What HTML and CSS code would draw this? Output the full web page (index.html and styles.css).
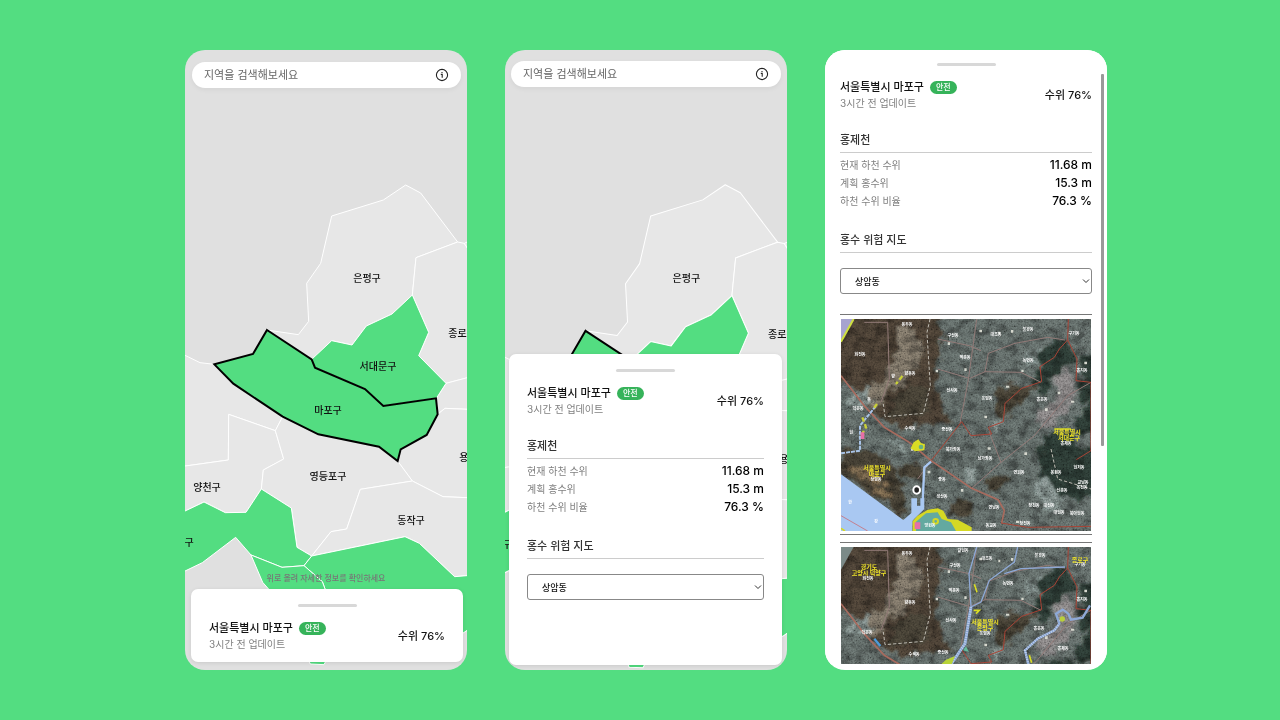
FILE: index.html
```html
<!DOCTYPE html>
<html lang="ko">
<head>
<meta charset="utf-8">
<meta name="viewport" content="width=device-width, initial-scale=1">
<title>하천 수위 지도</title>
<link rel="stylesheet" href="styles.css">
</head>
<body>
<svg class="defs" aria-hidden="true">
  <symbol id="districts" viewBox="0 0 282 620" preserveAspectRatio="xMidYMid slice" overflow="visible">
    <svg width="282" height="620" viewBox="0 0 846 1860" overflow="visible">
      <g class="land">
        <path d="M-6 913L45 938 88 943 145 1001 293 1100 271 1142 131 1093 130 1230-6 1249Z"/>
        <path d="M440 498L595 450 662 405 707 429 818 576 693 623 682 735 621 792 544 828 501 885 440 872 382 928 246 840 340 854 371 814 365 700 407 640Z"/>
        <path d="M693 623L818 576 838 580 870 630 870 977 783 1000 701 917 731 847 682 735Z"/>
        <path d="M838 580L870 565 870 630Z"/>
        <path d="M783 1000L870 977 870 1079 780 1075 758 1092 754 1045Z"/>
        <path d="M638 1233L647 1198 725 1155 758 1093 780 1075 870 1079 870 1344 774 1340 682 1293Z"/>
        <path d="M131 1093L271 1142 296 1227 235 1260 229 1317 183 1387 121 1388 57 1356-6 1386-6 1249 130 1230Z"/>
        <path d="M293 1100L400 1153 582 1190 638 1233 682 1293 526 1318 485 1437 438 1445 380 1518 336 1492 319 1374 229 1317 235 1260 296 1227 271 1142Z"/>
        <path d="M682 1293L774 1340 870 1344 870 1575 809 1580 703 1480 660 1460 380 1518 438 1445 485 1437 526 1318Z"/>
      </g>
      <g class="land safe">
        <path d="M682 735L731 847 701 917 783 1000 754 1045 595 1068 540 1017 390 953 380 928 440 872 501 885 544 828 621 792Z"/>
        <path d="M-6 1386L57 1356 121 1388 183 1387 229 1317 319 1374 336 1492 380 1518 357 1547 291 1552 198 1515 152 1462 52 1538-6 1566Z"/>
        <path d="M380 1518L660 1460 703 1480 809 1580 870 1575 870 1725 833 1750 560 1800 425 1630 412 1595 357 1547Z"/>
        <path d="M198 1515L291 1552 357 1547 412 1595 425 1630 450 1780 417 1844 376 1842 300 1680 255 1622 233 1597Z"/>
      </g>
      <path class="chosen" d="M246 840L380 928 390 953 540 1017 595 1068 753 1045 758 1093 725 1155 647 1198 638 1233 582 1190 400 1153 293 1100 145 1001 88 943 204 912Z"/>
    </svg>
    <g class="names">
      <text x="182" y="232">은평구</text><text x="193" y="320">서대문구</text><text x="143" y="364">마포구</text>
      <text x="143" y="430">영등포구</text><text x="22" y="441">양천구</text><text x="226" y="474">동작구</text>
      <text x="277" y="287">종로구</text><text x="288" y="411">용산구</text><text x="-5" y="496">구로구</text>
    </g>
  </symbol>
  <symbol id="info" viewBox="0 0 14 14">
    <circle cx="7" cy="7" r="5.6" fill="none" stroke="#222" stroke-width="1.1"/>
    <path d="M5.8 6.4H7.2V9.8M7 4V5" fill="none" stroke="#222" stroke-width="1.1"/>
  </symbol>
  <filter id="grain" x="0" y="0" width="100%" height="100%">
    <feTurbulence type="fractalNoise" baseFrequency=".2" numOctaves="3" seed="8"/>
    <feColorMatrix values="1.6 0 0 0 -.3 1.6 0 0 0 -.3 1.6 0 0 0 -.3 0 0 0 0 .3"/>
  </filter>
  <filter id="ridges" x="0" y="0" width="100%" height="100%">
    <feTurbulence type="fractalNoise" baseFrequency=".03 .04" numOctaves="4" seed="3"/>
    <feColorMatrix values="0 0 0 0 0 0 0 0 0 0 0 0 0 0 0 2.6 0 0 0 -1.1"/>
  </filter>
  <filter id="rough" x="-5%" y="-5%" width="110%" height="110%">
    <feTurbulence type="fractalNoise" baseFrequency=".03" numOctaves="3" seed="5" result="n"/>
    <feDisplacementMap in="SourceGraphic" in2="n" scale="60" xChannelSelector="R" yChannelSelector="G"/>
    <feGaussianBlur stdDeviation="3"/>
  </filter>
  <symbol id="terrain" viewBox="0 0 750 636">
    <rect width="750" height="636" fill="#5c6562"/>
    <g filter="url(#rough)">
      <path fill="#463d33" d="M30-30H295L300 80 278 150 295 230 325 300 240 330 150 320 100 290 60 220-30 170V60Z"/>
      <path fill="#746d61" d="M165 15L225 25 245 110 215 165 180 200 130 230 105 275 60 215 150 160 170 90Z"/>
      <path fill="#433c30" d="M150 245L200 205 250 200 265 285 160 295ZM0 400L60 388 115 410 195 500 185 600 150 575 0 460ZM165 445L230 430 255 470 190 485ZM475 200L550 205 590 200 530 245 490 310 455 280ZM320 550L380 545 390 590 340 585ZM440 490L500 475 480 520 435 510Z"/>
      <path fill="#2b3830" d="M590 95L682 60 705 130 650 160 615 220 575 195 600 150ZM715 110L780 100V370L715 340 700 290 730 270ZM600 370L650 335 705 365 780 420V500L700 545 610 520 590 440Z"/>
      <path fill="#7d7a7a" d="M640 165L690 160 700 230 680 290 610 320 590 300 640 230Z"/>
      <path fill="#73624a" d="M25 455L70 440 110 475 90 495ZM90 500L135 490 160 540 145 550Z"/>
      <path fill="#7c8885" d="M20 240L75 205 95 240 50 260ZM150 345L195 375 185 395 145 365ZM370 450L410 445 415 480 380 485ZM560 110L590 90 600 125 570 150ZM460 310L490 300 480 340 455 345ZM580 500L620 480 680 540 620 590Z"/>
    </g>
    <rect width="750" height="636" filter="url(#ridges)" opacity=".35"/>
    <rect class="grain" width="750" height="636" filter="url(#grain)"/>
    <g fill="#d6d8ce"><path d="M415 32h8v8h-8ZM472 38h6v8h-6ZM510 33h7v8h-7ZM320 70h7v8h-7ZM284 152h7v8h-7ZM370 148h7v8h-7ZM430 290h8v8h-8ZM495 200h10v6h-10ZM541 152h7v7h-7ZM612 268h8v8h-8ZM730 128h8v8h-8ZM440 385h9v7h-9ZM650 218h8v8h-8ZM550 400h8v8h-8ZM260 455h8v8h-8ZM360 510h7v8h-7ZM525 605h9v7h-9ZM690 245h10v6h-10ZM210 388h7v7h-7Z"/></g>
    <g fill="none" stroke="#927b78" stroke-width="3">
      <path d="M357 313L382 183 407 0M387 178L432 158 442 103 522 73 620 55 672 63M290 60L385 80 420 95M290 150L385 178M430 158L540 160 600 190M392 508L480 430 580 350 680 230 750 190M272 423L230 480M445 340L480 430M120 250L145 180 140 10 70 10"/>
    </g>
    <path d="M0 170L72 263 130 325 205 370 270 425 392 508 472 543 490 575 482 612" fill="none" stroke="#a86b5e" stroke-width="5"/>
    <path d="M682 0L680 63 655 90 640 115 597 143 602 188 542 208 492 253 487 308 442 325 452 345 390 350 362 308 272 423M680 63L708 120 705 185 750 190V395L706 422M480 612L560 625 750 622" fill="none" stroke="#a84436" stroke-width="3"/>
    <path d="M267 0L258 40 262 110 268 200 247 283 132 293 127 255M630 390L650 480 750 510" fill="none" stroke="#bdbab1" stroke-width="3" stroke-dasharray="10 6"/>
  </symbol>
</svg>

<main class="board">
  <section class="phone">
    <svg class="map" viewBox="0 0 282 620" preserveAspectRatio="xMidYMid slice" role="img" aria-label="서울 지도"><use href="#districts" width="282" height="620"/></svg>
    <form class="search">
      <input type="search" aria-label="지역 검색" placeholder="지역을 검색해보세요">
      <button type="button" aria-label="정보"><svg><use href="#info"/></svg></button>
    </form>
    <p class="hint">위로 올려 자세한 정보를 확인하세요</p>
    <article class="sheet peek">
      <div class="handle"></div>
      <header class="summary">
        <div><h1>서울특별시 마포구 <span class="badge">안전</span></h1><p>3시간 전 업데이트</p></div>
        <strong>수위 76%</strong>
      </header>
    </article>
  </section>

  <section class="phone">
    <svg class="map" viewBox="2 1 280 616" preserveAspectRatio="xMidYMid slice" role="img" aria-label="서울 지도"><use href="#districts" width="282" height="620"/></svg>
    <form class="search raised">
      <input type="search" aria-label="지역 검색" placeholder="지역을 검색해보세요">
      <button type="button" aria-label="정보"><svg><use href="#info"/></svg></button>
    </form>
    <article class="sheet half">
      <div class="handle"></div>
      <header class="summary">
        <div><h1>서울특별시 마포구 <span class="badge">안전</span></h1><p>3시간 전 업데이트</p></div>
        <strong>수위 76%</strong>
      </header>
      <h2>홍제천</h2>
      <table>
        <tr><th scope="row">현재 하천 수위</th><td>11.68 m</td></tr>
        <tr><th scope="row">계획 홍수위</th><td>15.3 m</td></tr>
        <tr><th scope="row">하천 수위 비율</th><td>76.3 %</td></tr>
      </table>
      <h2>홍수 위험 지도</h2>
      <div class="picker">
        <select aria-label="동 선택"><option>상암동</option></select>
        <svg viewBox="0 0 8 6"><path d="M1 1.5L4 4.5 7 1.5"/></svg>
      </div>
    </article>
  </section>

  <section class="phone full">
    <article class="sheet whole">
      <div class="handle"></div>
      <header class="summary">
        <div><h1>서울특별시 마포구 <span class="badge">안전</span></h1><p>3시간 전 업데이트</p></div>
        <strong>수위 76%</strong>
      </header>
      <h2>홍제천</h2>
      <table>
        <tr><th scope="row">현재 하천 수위</th><td>11.68 m</td></tr>
        <tr><th scope="row">계획 홍수위</th><td>15.3 m</td></tr>
        <tr><th scope="row">하천 수위 비율</th><td>76.3 %</td></tr>
      </table>
      <h2>홍수 위험 지도</h2>
      <div class="picker">
        <select aria-label="동 선택"><option>상암동</option></select>
        <svg viewBox="0 0 8 6"><path d="M1 1.5L4 4.5 7 1.5"/></svg>
      </div>
      <div class="photos">
        <figure>
          <svg viewBox="0 0 250 212" role="img" aria-label="상암동 홍수 위험 지도">
            <use href="#terrain" width="250" height="212"/>
            <svg width="250" height="212" viewBox="0 0 750 636">
              <path d="M0 0H38L0 68Z" fill="#a6a3cf"/><path d="M38 0L0 68" stroke="#cfe040" stroke-width="6"/>
              <path d="M0 466L187 603 215 600 214 636H0Z" fill="#a9c8f2"/>
              <path d="M270 428L250 445 245 545" fill="none" stroke="#a9c8f2" stroke-width="7"/>
              <path d="M211 538H228V560H238V538H250V570L214 605 187 603 211 582Z" fill="#a9c8f2"/>
              <path d="M104 262L57 320 57 395 0 403" fill="none" stroke="#a9c3e6" stroke-width="6" stroke-dasharray="12 3"/>
              <path d="M184 171L165 195M108 255L98 268M64 295L75 325 60 350" stroke="#c9d038" stroke-width="7" fill="none" stroke-dasharray="14 8"/>
              <path d="M209 388L218 370 232 361 240 372 252 376 250 394 222 397Z" fill="#d9dc25"/><circle cx="240" cy="384" r="7" fill="#68ae83"/>
              <path d="M215 607L230 590 260 572 290 568 307 575 320 600 350 602 392 625V636H215Z" fill="#d5d824"/>
              <path d="M225 608L255 583 290 580 302 600 330 610 345 636H225Z" fill="#63a9a0"/>
              <circle cx="284" cy="607" r="7" fill="none" stroke="#d5d824" stroke-width="6"/>
              <path d="M221 610H238V630H221ZM59 340H70V360H59Z" fill="#e66fa7"/>
              <path d="M0 590L80 636" stroke="#d05c5e" stroke-width="2"/><path d="M640 330H690M0 628L12 636" stroke="#d5d824" stroke-width="5"/>
              <ellipse cx="227" cy="513" rx="10" ry="11" fill="#222" stroke="#fff" stroke-width="6"/>
            </svg>
            <g class="places">
              <text x="66" y="7">용두동</text><text x="112" y="18">구산동</text><text x="155" y="17">대조동</text><text x="187" y="12">불광동</text><text x="233" y="16">구기동</text><text x="19" y="37">화전동</text><text x="124" y="40">역촌동</text><text x="187" y="43">녹번동</text><text x="241" y="53">홍지동</text><text x="69" y="56">향동동</text><text x="52" y="59">향</text><text x="111" y="73">신사동</text><text x="146" y="81">응암동</text><text x="201" y="82">홍은동</text><text x="28" y="82">동</text><text x="17" y="91">덕은동</text><text x="69" y="111">수색동</text><text x="106" y="112">증산동</text><text x="225" y="126">홍제동</text><text x="112" y="132">북가좌동</text><text x="144" y="141">남가좌동</text><text x="178" y="155">연희동</text><text x="215" y="155">봉원동</text><text x="238" y="150">현저동</text><text x="242" y="165">교남동</text><text x="241" y="170">옥천동</text><text x="221" y="173">신촌동</text><text x="35" y="162">상암동</text><text x="101" y="162">중동</text><text x="101" y="179">성산동</text><text x="153" y="190">연남동</text><text x="193" y="188">창천동</text><text x="208" y="188">대신동</text><text x="218" y="195">대현동</text><text x="236" y="196">북아현동</text><text x="89" y="208">망원동</text><text x="150" y="208">동교동</text><text x="184" y="206">창전동</text><text x="10" y="115">현</text><text x="9" y="185">한</text><text x="35" y="204">강</text>
            </g>
            <g class="cities"><text x="226" y="115">서울특별시</text><text x="228" y="121">서대문구</text><text x="36" y="151">서울특별시</text><text x="36" y="157">마포구</text></g>
          </svg>
        </figure>
        <figure>
          <svg viewBox="0 0 250 212" role="img" aria-label="은평구 홍수 위험 지도">
            <use href="#terrain" width="250" height="212"/>
            <svg width="250" height="212" viewBox="0 0 750 636">
              <path d="M0 0H38L0 68Z" fill="#7b8a88"/>
              <g fill="none" stroke="#8ea9d6">
                <path d="M407 0L384 80 390 180 420 165 445 100 520 45 530 0M490 80L540 65 672 60" stroke-width="4"/>
                <path d="M390 180L372 290 330 352" stroke-width="9"/>
                <path d="M562 352L552 310 590 275 640 250 655 230 645 200 665 188 682 200 690 218 725 212 747 175" stroke-width="7"/>
                <path d="M390 180L372 290 330 352M562 352L552 310 590 275 640 250 655 230" stroke="#cfdcf2" stroke-width="7" stroke-dasharray="2 5"/>
                <path d="M100 275L118 297" stroke="#4c9bdc" stroke-width="7"/>
              </g>
              <path d="M400 112L408 136M398 190H415L405 200M565 325L572 347" stroke="#d9dc25" stroke-width="5" fill="none"/>
              <path d="M300 352L315 338 342 327 332 352Z" fill="#b7d338"/><path d="M366 310L375 298 384 315Z" fill="#65b89b"/><circle cx="664" cy="216" r="8" fill="#b9cf3c"/>
            </svg>
            <g class="places">
              <text x="66" y="8">용두동</text><text x="122" y="5">갈현동</text><text x="146" y="13">대조동</text><text x="199" y="10">불광동</text><text x="114" y="20">구산동</text><text x="239" y="19">구기동</text><text x="27" y="33">화전동</text><text x="167" y="38">녹번동</text><text x="113" y="45">역촌동</text><text x="69" y="57">향동동</text><text x="241" y="54">홍지동</text><text x="110" y="75">신사동</text><text x="144" y="88">응암동</text><text x="198" y="83">홍은동</text><text x="26" y="87">덕은동</text><text x="222" y="103">홍제동</text><text x="73" y="109">수색동</text><text x="102" y="107">증산동</text>
            </g>
            <g class="cities"><text x="28" y="22">경기도</text><text x="28" y="28">고양시 덕양구</text><text x="239" y="15">종로구</text><text x="144" y="77">서울특별시</text><text x="144" y="83">은평구</text></g>
          </svg>
        </figure>
      </div>
    </article>
    <div class="thumb"></div>
  </section>
</main>
</body>
</html>
```
FILE: styles.css
```css
* { box-sizing: border-box; }

body {
  margin: 0;
  background: #53dd81;
  color: #111;
  font-family: Inter, "Noto Sans CJK KR", sans-serif;
  font-size: 11px;
  line-height: 16px;
}

h1, h2, p, figure { margin: 0; font-weight: 400; }

.defs { position: absolute; width: 0; height: 0; }

.board {
  display: grid;
  grid-template-columns: repeat(3, minmax(0, 1fr));
  gap: 38px;
  height: 100vh;
  min-height: 600px;
  padding: 50px 173px 50px 185px;
}

.phone {
  position: relative;
  display: flex;
  flex-direction: column;
  min-height: 0;
  overflow: hidden;
  border-radius: 20px;
  background: #e0e0e0;
}

.phone.full { background: #fff; padding-bottom: 6px; }

.map { position: absolute; inset: 0; width: 100%; height: 100%; }
.land { fill: #e7e7e7; stroke: #fff; stroke-width: 3; stroke-linejoin: round; }
.safe { fill: #53dd81; }
.chosen { fill: #53dd81; stroke: #000; stroke-width: 6; }
.names { font-size: 10px; font-weight: 500; text-anchor: middle; fill: #111; }

.search {
  position: relative;
  display: flex;
  align-items: center;
  height: 26px;
  margin: 12px 6px 0 7px;
  padding: 0 12px;
  border-radius: 13px;
  background: #fff;
  box-shadow: 0 2px 5px #0000000d;
}
.search.raised { margin-top: 11px; margin-left: 6px; }
.search input {
  flex: 1;
  min-width: 0;
  padding: 0;
  border: 0;
  outline: 0;
  background: none;
  font: inherit;
}
.search input::placeholder { color: #666; }
.search button { display: flex; padding: 0; border: 0; background: none; }
.search svg { width: 14px; height: 14px; }

.hint {
  position: relative;
  margin: auto 0 3px;
  color: #777;
  font-size: 8px;
  font-weight: 500;
  text-align: center;
}

.sheet {
  position: relative;
  padding: 15px 18px 10px;
  border-radius: 7px;
  background: #fff;
  box-shadow: 0 1px 4px #0000001a;
}
.sheet.peek { margin: 0 4px 8px 6px; }
.sheet.half { margin: auto 5px 5px 4px; padding-bottom: 65px; }
.sheet.whole {
  flex: 1;
  min-height: 0;
  overflow: hidden;
  padding: 13px 15px 0;
  border-radius: 0;
  box-shadow: none;
}

.handle {
  width: 59px;
  height: 3px;
  margin: 0 auto 13px;
  border-radius: 2px;
  background: #d8d8d8;
}

.summary { display: flex; align-items: center; justify-content: space-between; }
.summary h1 { display: flex; align-items: center; gap: 6px; font-size: 11px; font-weight: 500; }
.summary p { color: #808080; font-size: 10px; }
.summary strong { font-size: 11px; font-weight: 500; }
.badge {
  padding: 0 6px;
  border-radius: 7px;
  background: #36b35a;
  color: #fff;
  font-size: 8px;
  line-height: 13px;
}

h2 {
  margin-top: 21px;
  padding-bottom: 4px;
  border-bottom: 1px solid #ccc;
  color: #333;
  font-size: 11px;
  font-weight: 500;
}

table { width: 100%; margin: 3px 0 22px; border-collapse: collapse; }
th, td { padding: 0; line-height: 18px; }
th { color: #808080; font-size: 10px; font-weight: 400; text-align: left; }
td { color: #000; font-size: 12px; font-weight: 500; text-align: right; }

.picker { position: relative; margin-top: 15px; }
.picker select {
  display: block;
  width: 100%;
  height: 26px;
  padding: 0 14px;
  border: 1px solid #888;
  border-radius: 3px;
  background: #fff;
  color: #111;
  appearance: none;
  font: 500 9px Inter, "Noto Sans CJK KR", sans-serif;
}
.picker svg {
  position: absolute;
  top: 10px;
  right: 2px;
  width: 8px;
  height: 6px;
  fill: none;
  stroke: #333;
  pointer-events: none;
}

.photos { display: grid; gap: 7px; margin-top: 20px; }
figure { padding: 4px 1px 3px; border: solid #777; border-width: 1px 0; }
figure > svg { display: block; width: 100%; }
.grain { mix-blend-mode: overlay; }
.places, .cities { text-anchor: middle; font-size: 4px; font-weight: 700; fill: #fff; }
.cities { font-size: 6px; fill: #eee32a; }

.thumb {
  position: absolute;
  top: 24px;
  right: 3px;
  width: 3px;
  height: 60%;
  border-radius: 1px;
  background: #999;
}
```
